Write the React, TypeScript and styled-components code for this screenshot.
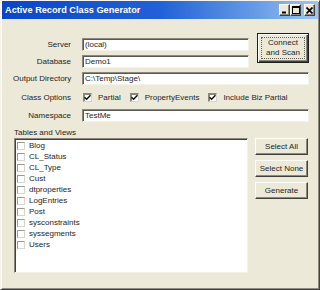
import * as React from 'react';
import styled, { createGlobalStyle } from 'styled-components';

const GlobalStyle = createGlobalStyle`
  html, body {
    margin: 0;
    padding: 0;
    background: #ece9d8;
  }
  body {
    font-family: "Liberation Sans", Arial, sans-serif;
    font-size: 8px;
    color: #1e1e1e;
  }
`;

const Window = styled.div`
  width: 320px;
  height: 290px;
  box-sizing: border-box;
  display: flex;
  flex-direction: column;
  background: #ece9d8;
  border: 1px solid;
  border-color: #f6f4ec #404040 #404040 #f6f4ec;
  box-shadow: inset 1px 1px 0 #ffffff, inset -1px -1px 0 #8c8a7e;
`;

const TitleBar = styled.div`
  height: 18px;
  margin: 0 1px;
  display: flex;
  align-items: center;
  padding: 0 3px;
  background: linear-gradient(to right, #0c44c8 0%, #2260d8 50%, #6c9ee6 82%, #a0c6f2 100%);
`;

const Title = styled.div`
  flex: 1;
  color: #ffffff;
  font-weight: bold;
  font-size: 9.2px;
  white-space: nowrap;
`;

const CaptionButton = styled.div<{ $gap?: boolean }>`
  width: 11px;
  height: 12px;
  box-sizing: border-box;
  margin-left: ${(p) => (p.$gap ? '3px' : '0')};
  background: #ece9d8;
  border: 1px solid;
  border-color: #ffffff #404040 #404040 #ffffff;
  box-shadow: inset -1px -1px 0 #8c8a7e;
  display: flex;
  align-items: center;
  justify-content: center;
`;

const Body = styled.div`
  flex: 1;
  padding: 17px 11px 0 12px;
  display: flex;
  flex-direction: column;
`;

const FormGrid = styled.div`
  display: grid;
  grid-template-columns: 69px 175px 52px;
  grid-template-rows: 17px 17px 17px 20px 17px;
  align-items: center;
`;

const Label = styled.div`
  text-align: right;
  padding-right: 11px;
  white-space: nowrap;
`;

const TextBox = styled.div<{ $wide?: boolean }>`
  grid-column: ${(p) => (p.$wide ? '2 / 4' : '2 / 3')};
  width: ${(p) => (p.$wide ? '227px' : '167px')};
  height: 13px;
  box-sizing: border-box;
  background: #ffffff;
  border: 1px solid;
  border-color: #8a887c #f4f2ea #f4f2ea #8a887c;
  box-shadow: inset 1px 1px 0 #5a5850;
  padding-left: 2px;
  display: flex;
  align-items: center;
  white-space: nowrap;
`;

const Button = styled.div<{ $default?: boolean }>`
  box-sizing: border-box;
  background: #ece9d8;
  border: 1px solid;
  border-color: ${(p) => (p.$default ? '#202020' : '#ffffff #404040 #404040 #ffffff')};
  box-shadow: ${(p) =>
    p.$default
      ? 'inset 1px 1px 0 #ffffff, inset -1px -1px 0 #404040, inset -2px -2px 0 #8c8a7e'
      : 'inset -1px -1px 0 #8c8a7e'};
  display: flex;
  align-items: center;
  justify-content: center;
  text-align: center;
  line-height: 10px;
  white-space: nowrap;
`;

const ConnectButton = styled(Button)`
  grid-column: 3;
  grid-row: 1 / 3;
  align-self: start;
  margin-top: -3px;
  height: 30px;
  position: relative;
`;

const FocusRing = styled.div`
  position: absolute;
  inset: 3px;
  border: 1px dotted #606060;
`;

const Options = styled.div`
  grid-column: 2 / 4;
  display: flex;
  align-items: center;
  padding-left: 1px;
`;

const Option = styled.div`
  display: flex;
  align-items: center;
  margin-right: 9px;
  white-space: nowrap;
`;

const Box = styled.div<{ $small?: boolean }>`
  width: ${(p) => (p.$small ? '8px' : '9px')};
  height: ${(p) => (p.$small ? '8px' : '9px')};
  box-sizing: border-box;
  background: #ffffff;
  border: 1px solid;
  border-color: ${(p) => (p.$small ? '#9c9a90 #d8d6cc #d8d6cc #9c9a90' : '#8a887c #d8d6cc #d8d6cc #8a887c')};
  box-shadow: ${(p) => (p.$small ? 'none' : 'inset 1px 1px 0 #8a887c')};
  margin-right: ${(p) => (p.$small ? '4px' : '6px')};
  display: flex;
  align-items: center;
  justify-content: center;
  flex-shrink: 0;
`;

const SectionLabel = styled.div`
  margin-top: 3px;
  height: 11px;
  line-height: 11px;
  padding-left: 1px;
`;

const Lower = styled.div`
  display: flex;
  gap: 7px;
`;

const ListBox = styled.div`
  margin-left: 1px;
  width: 234px;
  height: 135px;
  box-sizing: border-box;
  background: #ffffff;
  border: 1px solid;
  border-color: #8a887c #f4f2ea #f4f2ea #8a887c;
  box-shadow: inset 1px 1px 0 #404040;
  padding: 1px 0 0 2px;
`;

const ListRow = styled.div`
  height: 11px;
  display: flex;
  align-items: center;
  white-space: nowrap;
`;

const SideButtons = styled.div`
  display: flex;
  flex-direction: column;
  gap: 5px;
`;

const SideButton = styled(Button)`
  width: 53px;
  height: 17px;
`;

const Check = () => (
  <svg width="7" height="7" viewBox="0 0 7 7">
    <path d="M0.5 3.2 L2.6 5.3 L6.5 1.2" stroke="#101010" strokeWidth="1.5" fill="none" />
  </svg>
);

const tables = [
  'Blog',
  'CL_Status',
  'CL_Type',
  'Cust',
  'dtproperties',
  'LogEntries',
  'Post',
  'sysconstraints',
  'syssegments',
  'Users',
];

const App = () => (
  <Window>
    <GlobalStyle />
    <TitleBar>
      <Title>Active Record Class Generator</Title>
      <CaptionButton>
        <svg width="7" height="8" viewBox="0 0 7 8">
          <rect x="1" y="5.5" width="4" height="2" fill="#000" />
        </svg>
      </CaptionButton>
      <CaptionButton>
        <svg width="8" height="8" viewBox="0 0 8 8">
          <rect x="0.5" y="0.5" width="7" height="7" stroke="#000" fill="none" />
          <rect x="0" y="0" width="8" height="2" fill="#000" />
        </svg>
      </CaptionButton>
      <CaptionButton $gap>
        <svg width="7" height="7" viewBox="0 0 7 7">
          <path d="M0.5 0.5 L6.5 6.5 M6.5 0.5 L0.5 6.5" stroke="#000" strokeWidth="1.7" />
        </svg>
      </CaptionButton>
    </TitleBar>
    <Body>
      <FormGrid>
        <Label>Server</Label>
        <TextBox>(local)</TextBox>
        <ConnectButton $default>
          <FocusRing />
          Connect
          <br />
          and Scan
        </ConnectButton>
        <Label>Database</Label>
        <TextBox>Demo1</TextBox>
        <Label>Output Directory</Label>
        <TextBox $wide>C:\Temp\Stage\</TextBox>
        <Label>Class Options</Label>
        <Options>
          <Option>
            <Box>
              <Check />
            </Box>
            Partial
          </Option>
          <Option>
            <Box>
              <Check />
            </Box>
            PropertyEvents
          </Option>
          <Option>
            <Box>
              <Check />
            </Box>
            Include Biz Partial
          </Option>
        </Options>
        <Label>Namespace</Label>
        <TextBox $wide>TestMe</TextBox>
      </FormGrid>
      <SectionLabel>Tables and Views</SectionLabel>
      <Lower>
        <ListBox>
          {tables.map((t) => (
            <ListRow key={t}>
              <Box $small />
              {t}
            </ListRow>
          ))}
        </ListBox>
        <SideButtons>
          <SideButton>Select All</SideButton>
          <SideButton>Select None</SideButton>
          <SideButton>Generate</SideButton>
        </SideButtons>
      </Lower>
    </Body>
  </Window>
);

export default App;
